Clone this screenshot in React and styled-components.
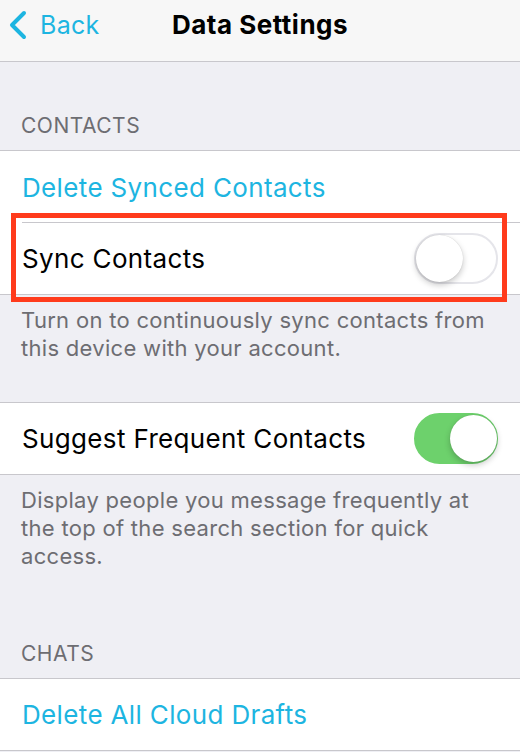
import React from "react"
import styled, { createGlobalStyle } from "styled-components"

const GlobalStyle = createGlobalStyle`
  html, body {
    margin: 0;
    padding: 0;
    background: #efeff4;
  }
  body {
    font-family: Inter, "Liberation Sans", Arial, sans-serif;
    -webkit-font-smoothing: antialiased;
  }
`

const Page = styled.div`
  width: 520px;
  height: 752px;
  overflow: hidden;
  background: #efeff4;
`

const NavBar = styled.div`
  height: 62px;
  box-sizing: border-box;
  background: #f7f7f7;
  border-bottom: 1px solid #c8c7cc;
  display: grid;
  grid-template-columns: 1fr auto 1fr;
  align-items: start;
  padding-top: 9px;
`

const BackButton = styled.div`
  display: flex;
  align-items: center;
  gap: 12px;
  padding-left: 8px;
  color: #1db5e1;
  font-size: 25px;
  line-height: 32px;
  letter-spacing: 0.3px;
`

const Title = styled.div`
  font-size: 26px;
  font-weight: 700;
  line-height: 32px;
  color: #000;
  letter-spacing: 0.5px;
`

const SectionHeader = styled.div`
  height: ${props => props.height}px;
  box-sizing: border-box;
  display: flex;
  align-items: flex-end;
  padding: 0 21px 11px;
  font-size: 21px;
  line-height: 26px;
  letter-spacing: 0.5px;
  color: #6d6d72;
  border-bottom: 1px solid #c8c7cc;
`

const Group = styled.div`
  background: #fff;
  border-bottom: 1px solid #c8c7cc;
  ${props => props.topBorder && "border-top: 1px solid #c8c7cc;"}
`

const Row = styled.div`
  position: relative;
  height: ${props => (props.last ? 71 : 72)}px;
  box-sizing: border-box;
  display: flex;
  align-items: center;
  justify-content: space-between;
  padding: 0 22px;
  ${props =>
    !props.last &&
    `
    &::after {
      content: "";
      position: absolute;
      left: 22px;
      right: 0;
      bottom: 0;
      height: 1px;
      background: #c8c7cc;
    }
  `}
`

const Label = styled.span`
  font-size: 26px;
  color: ${props => (props.action ? "#1db5e1" : "#000")};
  letter-spacing: 0.35px;
`

const Footer = styled.div`
  height: ${props => props.height}px;
  box-sizing: border-box;
  padding: 11px 30px 0 21px;
  font-size: 22px;
  line-height: 28px;
  letter-spacing: 0.3px;
  color: #6d6d72;
`

const Toggle = styled.div`
  position: relative;
  width: 84px;
  height: 51px;
  box-sizing: border-box;
  border-radius: 26px;
  background: ${props => (props.on ? "#6dd16c" : "#fff")};
  border: 2px solid ${props => (props.on ? "#6dd16c" : "#e5e5ea")};
  flex-shrink: 0;
`

const Knob = styled.div`
  position: absolute;
  top: 0;
  left: ${props => (props.on ? "34px" : "0")};
  width: 47px;
  height: 47px;
  border-radius: 50%;
  background: #fff;
  box-shadow: 0 3px 6px rgba(0, 0, 0, 0.22), 0 0 1px rgba(0, 0, 0, 0.2);
`

const Highlight = styled.div`
  position: absolute;
  top: -10px;
  bottom: -8px;
  left: 11px;
  right: 13px;
  border: 5px solid #ff3b1c;
  pointer-events: none;
`

const Switch = ({ on }) => (
  <Toggle on={on}>
    <Knob on={on} />
  </Toggle>
)

const Chevron = () => (
  <svg width="20" height="30" viewBox="0 0 20 30">
    <path
      d="M16 3 L4 15 L16 27"
      fill="none"
      stroke="#1db5e1"
      strokeWidth="4"
      strokeLinecap="round"
      strokeLinejoin="round"
    />
  </svg>
)

export default function App() {
  return (
    <Page>
      <GlobalStyle />
      <NavBar>
        <BackButton>
          <Chevron />
          Back
        </BackButton>
        <Title>Data Settings</Title>
        <div />
      </NavBar>

      <SectionHeader height={89}>CONTACTS</SectionHeader>
      <Group>
        <Row>
          <Label action>Delete Synced Contacts</Label>
        </Row>
        <Row last>
          <Label>Sync Contacts</Label>
          <Switch on={false} />
          <Highlight />
        </Row>
      </Group>
      <Footer height={107}>
        Turn on to continuously sync contacts from this device with your
        account.
      </Footer>

      <Group topBorder>
        <Row last>
          <Label>Suggest Frequent Contacts</Label>
          <Switch on />
        </Row>
      </Group>
      <Footer height={115}>
        Display people you message frequently at the top of the search section
        for quick access.
      </Footer>

      <SectionHeader height={89}>CHATS</SectionHeader>
      <Group>
        <Row last>
          <Label action>Delete All Cloud Drafts</Label>
        </Row>
      </Group>
    </Page>
  )
}
